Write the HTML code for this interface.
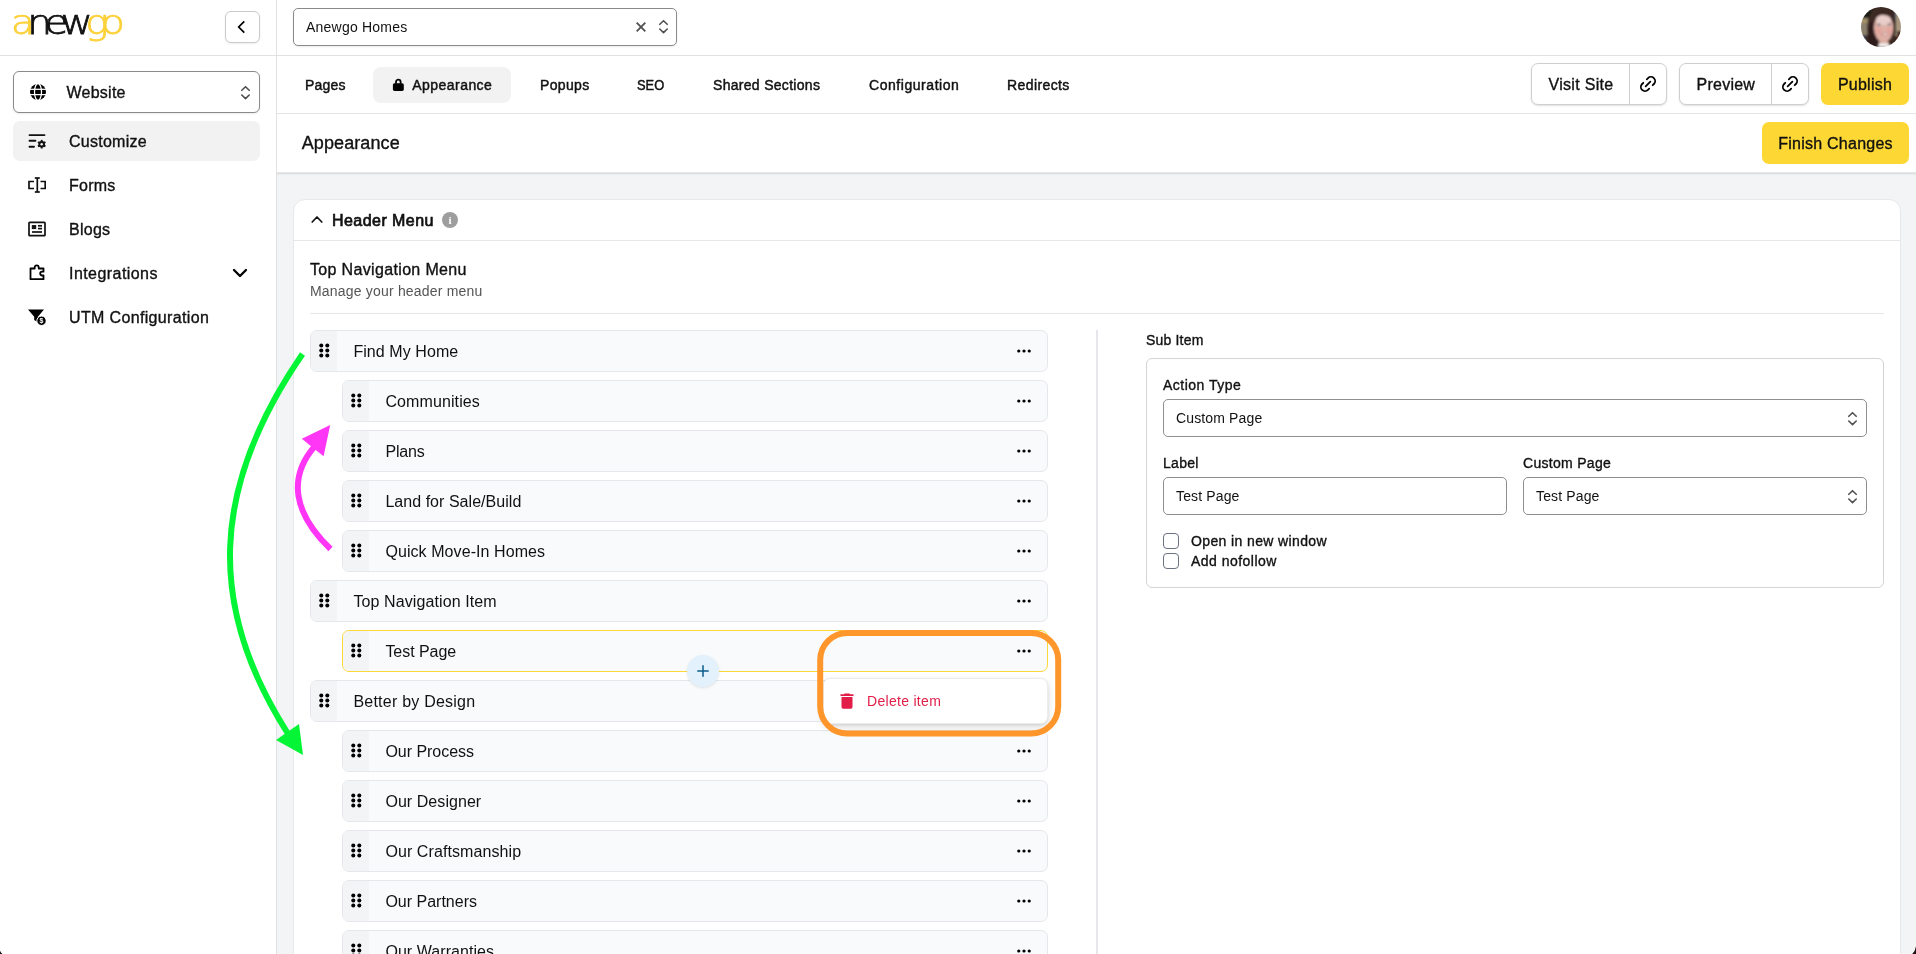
<!DOCTYPE html>
<html lang="en">
<head>
<meta charset="utf-8">
<title>Appearance - Header Menu</title>
<style>
*{box-sizing:border-box;margin:0;padding:0}
html,body{width:1916px;height:954px;overflow:hidden;background:#fff}
body{position:relative;font-family:"Liberation Sans",sans-serif;color:#111;font-size:16px;-webkit-font-smoothing:antialiased}
.abs{position:absolute}
.med{-webkit-text-stroke:0.35px currentColor}
.semi{-webkit-text-stroke:0.7px currentColor}
svg{display:block}
/* sidebar */
#sidebar{left:0;top:0;width:277px;height:954px;border-right:1px solid #e2e2e2;background:#fff}
#topline{left:0;top:55px;width:1916px;height:1px;background:#e2e2e2}
.navitem{left:13px;width:247px;height:40px;border-radius:7px}
.navitem .ico{position:absolute;left:15px;top:11px;width:18px;height:18px}
.navitem .lbl{position:absolute;left:56px;top:1px;line-height:40px;font-size:16px;letter-spacing:.25px;white-space:nowrap}
/* tabs */
.tab{top:67px;height:36px;line-height:36px;font-size:14px;white-space:nowrap;letter-spacing:.05px;-webkit-text-stroke:0.45px currentColor}
.btn{top:63px;height:42px;border-radius:7px;font-size:16px;line-height:44px;white-space:nowrap}
.obtn{border:1px solid #cfcfcf;background:#fff;box-shadow:0 1px 2px rgba(0,0,0,.12)}
.ybtn{background:#fdd835}
/* list rows */
.row{height:42px;border:1px solid #e5e7eb;border-radius:7px;background:#f9fafb;overflow:hidden}
.row .h{position:absolute;left:0;top:0;width:26px;height:40px;background:#f3f4f6}
.row .h svg{position:absolute;left:7.600px;top:12.400px}
.row .t{position:absolute;left:42.400px;top:1px;line-height:40px;font-size:16px;white-space:nowrap}
.row .d{position:absolute;right:16px;top:18px}
.r1{left:310px;width:738px}
.r2{left:342px;width:706px}
.fl{font-size:14px;white-space:nowrap;line-height:16px}
.inp{height:38px;border:1px solid #8f8f8f;border-radius:5px;background:#fff;font-size:14px;line-height:36px;padding-left:12px;white-space:nowrap;letter-spacing:.14px}
.chev{position:absolute;right:9px;top:10px}
.sel{border-color:#fbd737}
</style>
</head>
<body>
<div id="root" style="position:absolute;left:0;top:0;width:1916px;height:954px;will-change:transform">
<svg width="0" height="0" style="position:absolute">
 <defs>
  <g id="grip"><circle cx="2.2" cy="2.2" r="1.95"/><circle cx="8" cy="2.2" r="1.95"/><circle cx="2.2" cy="7.1" r="1.95"/><circle cx="8" cy="7.1" r="1.95"/><circle cx="2.2" cy="12" r="1.95"/><circle cx="8" cy="12" r="1.95"/></g>
  <g id="dots"><circle cx="1.7" cy="1.7" r="1.55"/><circle cx="6.7" cy="1.7" r="1.55"/><circle cx="11.7" cy="1.7" r="1.55"/></g>
  <g id="ud" fill="none" stroke="#505050" stroke-width="1.6" stroke-linecap="round" stroke-linejoin="round"><path d="M0.800 6.300 L4.500 2.700 L8.200 6.300"/><path d="M0.800 11 L4.500 14.600 L8.200 11"/></g>
  <g id="link" fill="none" stroke="#000" stroke-width="2.15" stroke-linecap="round" stroke-linejoin="round"><path d="M9 17H7A5 5 0 0 1 7 7h2"/><path d="M15 7h2a5 5 0 1 1 0 10h-2"/><line x1="8" x2="16" y1="12" y2="12"/></g>
 </defs>
</svg>

<!-- ========== SIDEBAR ========== -->
<div id="sidebar" class="abs"></div>
<div id="topline" class="abs"></div>

<!-- logo -->
<div class="abs" id="logo" style="left:11px;top:0.900px;width:116px;height:44px;font-size:32.800px;line-height:44px;letter-spacing:-6.400px;white-space:nowrap;font-family:'DejaVu Sans Light','DejaVu Sans',sans-serif;font-weight:200;-webkit-text-stroke:0.75px currentColor;transform:scaleX(1.19);transform-origin:0 0"><span style="color:#fdd13a">a</span><span style="color:#111">new</span><span style="color:#fdd13a">go</span></div>

<!-- collapse btn -->
<div class="abs" style="left:225px;top:11px;width:35px;height:32px;border:1px solid #cbcbcb;border-radius:6px;background:#fff;box-shadow:0 1px 2px rgba(0,0,0,.08)">
 <svg class="abs" style="left:10.300px;top:8px" width="12" height="14" viewBox="0 0 12 14" fill="none" stroke="#000" stroke-width="1.700" stroke-linecap="butt" stroke-linejoin="miter"><path d="M8.300 1.300 L2.700 7 L8.300 12.700"/></svg>
</div>

<!-- website select -->
<div class="abs" style="left:13px;top:71px;width:247px;height:42px;border:1px solid #8a8a8a;border-radius:6px;background:#fff;box-shadow:0 1px 2px rgba(0,0,0,.08)">
 <svg class="abs" style="left:16px;top:12px" width="16" height="16" viewBox="0 0 16 16"><circle cx="8" cy="8" r="8" fill="#000"/><g fill="none" stroke="#fff" stroke-width="1.25"><ellipse cx="8" cy="8" rx="3.5" ry="8.4"/><line x1="0" y1="5.3" x2="16" y2="5.3"/><line x1="0" y1="10.600" x2="16" y2="10.600"/></g></svg>
 <div class="abs med" style="left:52.500px;top:1px;line-height:40px;font-size:16px;letter-spacing:.25px">Website</div>
 <svg class="abs" style="right:9.300px;top:11.500px" width="9" height="17" viewBox="0 0 9 17"><use href="#ud"/></svg>
</div>

<!-- nav items -->
<div class="abs navitem" style="top:121px;background:#f2f2f2">
 <svg class="ico" viewBox="0 0 18 18" fill="none" stroke="#111" stroke-width="1.9" stroke-linecap="round"><line x1="1.500" y1="3.100" x2="16.500" y2="3.100"/><line x1="1.500" y1="8.800" x2="7.400" y2="8.800"/><line x1="1.500" y1="14.700" x2="6" y2="14.700"/><g transform="translate(13.700 12.200)" stroke-linecap="butt"><circle cx="0" cy="0" r="2.300" stroke-width="2"/><g stroke-width="1.900"><line x1="0" y1="-4.300" x2="0" y2="4.300"/><line x1="-3.720" y1="-2.150" x2="3.720" y2="2.150"/><line x1="-3.720" y1="2.150" x2="3.720" y2="-2.150"/></g><circle cx="0" cy="0" r="1.250" fill="#f2f2f2" stroke="none"/></g></svg>
 <div class="lbl med">Customize</div>
</div>
<div class="abs navitem" style="top:165px">
 <svg class="ico" viewBox="0 0 18 18" fill="none" stroke="#111" stroke-width="1.7"><path d="M6 5.5H1v7h5"/><path d="M12.5 5.5H17.2v7H12.5"/><line x1="9.3" y1="2" x2="9.3" y2="16"/><line x1="6.8" y1="2" x2="11.8" y2="2"/><line x1="6.8" y1="16" x2="11.8" y2="16"/></svg>
 <div class="lbl med">Forms</div>
</div>
<div class="abs navitem" style="top:209px">
 <svg class="ico" viewBox="0 0 18 18" fill="none" stroke="#111" stroke-width="1.7"><rect x="1" y="2.3" width="16" height="13.4" rx="0.8"/><rect x="4.3" y="5.6" width="3.4" height="3" fill="#111" stroke-width="1"/><line x1="10" y1="5.8" x2="14" y2="5.8"/><line x1="10" y1="8.6" x2="14" y2="8.6"/><line x1="4" y1="12" x2="14" y2="12"/></svg>
 <div class="lbl med">Blogs</div>
</div>
<div class="abs navitem" style="top:253px">
 <svg class="ico" style="top:10.200px;left:15.600px" viewBox="0 0 18 18" fill="none" stroke="#000" stroke-width="1.800" stroke-linejoin="round"><path d="M1.500 5.500h4.200V4.300a2 2 0 0 1 4 0V5.500h4.800v3.200h-1.400a1.900 1.900 0 0 0 0 3.800h1.400v3.700H1.500z"/></svg>
 <div class="lbl med" style="letter-spacing:.44px">Integrations</div>
 <svg class="abs" style="left:219px;top:15px" width="16" height="10" viewBox="0 0 16 10" fill="none" stroke="#000" stroke-width="2.300" stroke-linecap="round" stroke-linejoin="round"><path d="M2 2 L8 8 L14 2"/></svg>
</div>
<div class="abs navitem" style="top:297px">
 <svg class="ico" viewBox="0 0 18 18"><path d="M0 1.400h16L9.900 8.800V14.300L6.200 12V8.800z" fill="#000"/><circle cx="13.500" cy="12.800" r="4.700" fill="#000" stroke="#fff" stroke-width="1"/><text x="13.500" y="15.300" font-size="7" font-weight="bold" fill="#fff" text-anchor="middle" font-family="Liberation Sans, sans-serif">$</text></svg>
 <div class="lbl med" style="letter-spacing:.35px">UTM Configuration</div>
</div>

<!-- ========== TOP BAR ========== -->
<div class="abs" style="left:293px;top:8px;width:384px;height:38px;border:1px solid #8a8a8a;border-radius:5px;background:#fff;box-shadow:0 1px 2px rgba(0,0,0,.08)">
 <div class="abs" style="left:12px;top:0;line-height:36px;font-size:14px;letter-spacing:.22px">Anewgo Homes</div>
 <svg class="abs" style="left:342px;top:13px" width="10" height="10" viewBox="0 0 10 10" fill="none" stroke="#505050" stroke-width="1.800" stroke-linecap="butt"><path d="M0.700 0.700 L9.300 9.300 M9.300 0.700 L0.700 9.300"/></svg>
 <svg class="abs" style="left:365px;top:9.300px" width="9" height="17" viewBox="0 0 9 17"><use href="#ud"/></svg>
</div>

<!-- avatar -->
<svg class="abs" style="left:1861px;top:7px" width="40" height="40" viewBox="0 0 40 40">
 <defs><clipPath id="avc"><circle cx="20" cy="20" r="20"/></clipPath><filter id="avb" x="-10%" y="-10%" width="120%" height="120%"><feGaussianBlur stdDeviation="0.8"/></filter></defs>
 <g clip-path="url(#avc)"><g filter="url(#avb)">
  <rect x="-2" y="-2" width="44" height="44" fill="#35231e"/>
  <rect x="-2" y="-2" width="12" height="13" fill="#1d1d15"/>
  <rect x="-2" y="11" width="9" height="17" fill="#8b806c"/>
  <rect x="0" y="13" width="6" height="2.500" fill="#b09a62"/>
  <rect x="-2" y="28" width="7" height="8" fill="#3f4650"/>
  <rect x="33" y="5" width="9" height="24" fill="#a8977e"/>
  <rect x="33.300" y="5" width="1.600" height="20" fill="#1d2342"/>
  <rect x="36" y="24" width="6" height="8" fill="#3a2016"/>
  <rect x="37" y="30" width="5" height="5" fill="#b24a22"/>
  <ellipse cx="20.500" cy="22" rx="14.500" ry="23" fill="#3c2923"/>
  <ellipse cx="13" cy="28" rx="6" ry="14" fill="#2f1f1b"/>
  <path d="M17 40 L19 34 H26.500 L29 40 Z" fill="#efe9e5"/>
  <rect x="18.500" y="30" width="8.500" height="6" fill="#d7a093"/>
  <ellipse cx="22.600" cy="21" rx="9.700" ry="14.200" fill="#deb0a6"/>
  <ellipse cx="22.500" cy="13" rx="7.600" ry="5.200" fill="#e8cdc8"/>
  <ellipse cx="17.500" cy="23.500" rx="3" ry="3.200" fill="#e3a59d"/>
  <ellipse cx="28.500" cy="23.500" rx="2.800" ry="3.200" fill="#e3a59d"/>
  <ellipse cx="18" cy="17.600" rx="2" ry="0.900" fill="#5d6f7f"/>
  <ellipse cx="28.200" cy="17.300" rx="1.900" ry="0.900" fill="#5d6f7f"/>
  <ellipse cx="24" cy="27.300" rx="4.200" ry="1.500" fill="#c98682"/>
  <ellipse cx="24.300" cy="27.300" rx="3" ry="0.800" fill="#f1e4e0"/>
  <path d="M12 14 C13 5 20 3 24 4 C30 5 33 10 33 18 C31 11 28 8 22 8 C17 8 14 10 12 14Z" fill="#3a2620"/>
 </g></g>
</svg>

<!-- ========== TABS ========== -->
<div class="abs" style="left:277px;top:113px;width:1639px;height:1px;background:#e5e5e5"></div>
<div class="abs tab med" style="left:305px;letter-spacing:0.2px">Pages</div>
<div class="abs" style="left:373px;top:67px;width:138px;height:36px;border-radius:8px;background:#f2f2f2"></div>
<svg class="abs" style="left:392px;top:78px" width="12" height="13" viewBox="0 0 12 13"><path d="M4 5.800V4a2.300 2.300 0 0 1 4.600 0V5.800" fill="none" stroke="#000" stroke-width="1.800"/><rect x="0.900" y="5.300" width="10.900" height="7.600" rx="1.600" fill="#000"/></svg>
<div class="abs tab med" style="left:412.300px;letter-spacing:0.45px">Appearance</div>
<div class="abs tab med" style="left:540px;letter-spacing:0.35px">Popups</div>
<div class="abs tab med" style="left:637px;letter-spacing:0;transform:scaleX(.92);transform-origin:0 50%">SEO</div>
<div class="abs tab med" style="left:713px;letter-spacing:0.3px">Shared Sections</div>
<div class="abs tab med" style="left:869px;letter-spacing:0.55px">Configuration</div>
<div class="abs tab med" style="left:1007px;letter-spacing:0.4px">Redirects</div>

<!-- right buttons -->
<div class="abs btn obtn" style="left:1531px;width:136px">
 <div class="abs med" style="left:16.500px;top:1px;line-height:40px;letter-spacing:.3px">Visit Site</div>
 <div class="abs" style="left:97px;top:0;width:1px;height:40px;background:#cfcfcf"></div>
 <svg class="abs" style="left:106.200px;top:10.200px" width="20" height="20" viewBox="0 0 24 24"><g transform="rotate(-45 12 12)"><use href="#link"/></g></svg>
</div>
<div class="abs btn obtn" style="left:1679px;width:130px">
 <div class="abs med" style="left:16.500px;top:1px;line-height:40px;letter-spacing:.25px">Preview</div>
 <div class="abs" style="left:91px;top:0;width:1px;height:40px;background:#cfcfcf"></div>
 <svg class="abs" style="left:100.200px;top:10.200px" width="20" height="20" viewBox="0 0 24 24"><g transform="rotate(-45 12 12)"><use href="#link"/></g></svg>
</div>
<div class="abs btn ybtn med" style="left:1821px;width:88px;text-align:center;letter-spacing:.25px">Publish</div>

<!-- ========== TITLE ROW ========== -->
<div class="abs med" style="left:301.700px;top:122px;line-height:42px;font-size:18px;letter-spacing:.1px">Appearance</div>
<div class="abs btn ybtn med" style="left:1762px;top:122px;width:147px;text-align:center;letter-spacing:.25px">Finish Changes</div>

<!-- ========== CONTENT BG ========== -->
<div class="abs" style="left:277px;top:172px;width:1639px;height:782px;background:#f3f4f6;box-shadow:inset 0 2px 2px -1px rgba(0,0,0,.12);border-top:1px solid #e6e7e9"></div>

<!-- card -->
<div class="abs" style="left:293px;top:199px;width:1608px;height:780px;background:#fff;border:1px solid #e7e8ea;border-radius:12px"></div>
<svg class="abs" style="left:311px;top:215px" width="12" height="9" viewBox="0 0 12 9" fill="none" stroke="#111" stroke-width="1.7" stroke-linecap="round" stroke-linejoin="round"><path d="M1.200 7 L6 2 L10.800 7"/></svg>
<div class="abs semi" style="left:332px;top:200.500px;line-height:40px;font-size:16px;letter-spacing:.45px">Header Menu</div>
<div class="abs" style="left:442px;top:212px;width:16px;height:16px;border-radius:50%;background:#9e9e9e;color:#fff;font-size:11px;line-height:16px;text-align:center;font-weight:bold;font-family:'Liberation Serif',serif">i</div>
<div class="abs" style="left:294px;top:240px;width:1606px;height:1px;background:#e5e7eb"></div>

<div class="abs med" style="left:310px;top:260px;line-height:20px;font-size:16px;letter-spacing:.34px">Top Navigation Menu</div>
<div class="abs" style="left:310px;top:282px;line-height:18px;font-size:14px;color:#555;letter-spacing:.19px">Manage your header menu</div>
<div class="abs" style="left:310px;top:313px;width:1574px;height:1px;background:#e5e7eb"></div>

<!-- vertical divider -->
<div class="abs" style="left:1096px;top:330px;width:2px;height:624px;background:#e5e7eb"></div>

<!-- rows -->
<div class="abs row r1" style="top:330px"><div class="h"><svg width="11" height="15" viewBox="0 0 10.6 14.2"><use href="#grip"/></svg></div><div class="t" style="letter-spacing:0.07px">Find My Home</div><svg class="d" width="14" height="4" viewBox="0 0 13.4 3.4"><use href="#dots"/></svg></div>
<div class="abs row r2" style="top:380px"><div class="h"><svg width="11" height="15" viewBox="0 0 10.6 14.2"><use href="#grip"/></svg></div><div class="t" style="letter-spacing:0.11px">Communities</div><svg class="d" width="14" height="4" viewBox="0 0 13.4 3.4"><use href="#dots"/></svg></div>
<div class="abs row r2" style="top:430px"><div class="h"><svg width="11" height="15" viewBox="0 0 10.6 14.2"><use href="#grip"/></svg></div><div class="t" style="letter-spacing:-0.18px">Plans</div><svg class="d" width="14" height="4" viewBox="0 0 13.4 3.4"><use href="#dots"/></svg></div>
<div class="abs row r2" style="top:480px"><div class="h"><svg width="11" height="15" viewBox="0 0 10.6 14.2"><use href="#grip"/></svg></div><div class="t" style="letter-spacing:0.04px">Land for Sale/Build</div><svg class="d" width="14" height="4" viewBox="0 0 13.4 3.4"><use href="#dots"/></svg></div>
<div class="abs row r2" style="top:530px"><div class="h"><svg width="11" height="15" viewBox="0 0 10.6 14.2"><use href="#grip"/></svg></div><div class="t" style="letter-spacing:0.08px">Quick Move-In Homes</div><svg class="d" width="14" height="4" viewBox="0 0 13.4 3.4"><use href="#dots"/></svg></div>
<div class="abs row r1" style="top:580px"><div class="h"><svg width="11" height="15" viewBox="0 0 10.6 14.2"><use href="#grip"/></svg></div><div class="t" style="letter-spacing:0.1px">Top Navigation Item</div><svg class="d" width="14" height="4" viewBox="0 0 13.4 3.4"><use href="#dots"/></svg></div>
<div class="abs row r2 sel" style="top:630px"><div class="h"><svg width="11" height="15" viewBox="0 0 10.6 14.2"><use href="#grip"/></svg></div><div class="t" style="letter-spacing:-0.04px">Test Page</div><svg class="d" width="14" height="4" viewBox="0 0 13.4 3.4"><use href="#dots"/></svg></div>
<div class="abs row r1" style="top:680px"><div class="h"><svg width="11" height="15" viewBox="0 0 10.6 14.2"><use href="#grip"/></svg></div><div class="t" style="letter-spacing:0.23px">Better by Design</div><svg class="d" width="14" height="4" viewBox="0 0 13.4 3.4"><use href="#dots"/></svg></div>
<div class="abs row r2" style="top:730px"><div class="h"><svg width="11" height="15" viewBox="0 0 10.6 14.2"><use href="#grip"/></svg></div><div class="t" style="letter-spacing:-0.03px">Our Process</div><svg class="d" width="14" height="4" viewBox="0 0 13.4 3.4"><use href="#dots"/></svg></div>
<div class="abs row r2" style="top:780px"><div class="h"><svg width="11" height="15" viewBox="0 0 10.6 14.2"><use href="#grip"/></svg></div><div class="t" style="letter-spacing:0.06px">Our Designer</div><svg class="d" width="14" height="4" viewBox="0 0 13.4 3.4"><use href="#dots"/></svg></div>
<div class="abs row r2" style="top:830px"><div class="h"><svg width="11" height="15" viewBox="0 0 10.6 14.2"><use href="#grip"/></svg></div><div class="t" style="letter-spacing:0.09px">Our Craftsmanship</div><svg class="d" width="14" height="4" viewBox="0 0 13.4 3.4"><use href="#dots"/></svg></div>
<div class="abs row r2" style="top:880px"><div class="h"><svg width="11" height="15" viewBox="0 0 10.6 14.2"><use href="#grip"/></svg></div><div class="t" style="letter-spacing:0.0px">Our Partners</div><svg class="d" width="14" height="4" viewBox="0 0 13.4 3.4"><use href="#dots"/></svg></div>
<div class="abs row r2" style="top:930px"><div class="h"><svg width="11" height="15" viewBox="0 0 10.6 14.2"><use href="#grip"/></svg></div><div class="t" style="letter-spacing:0.06px">Our Warranties</div><svg class="d" width="14" height="4" viewBox="0 0 13.4 3.4"><use href="#dots"/></svg></div>

<!-- plus button -->
<div class="abs" style="left:687px;top:655px;width:32px;height:32px;border-radius:50%;background:#e3f1fc;box-shadow:0 1px 3px rgba(0,0,0,.10)">
 <svg class="abs" style="left:10px;top:10px" width="12" height="12" viewBox="0 0 12 12" fill="none" stroke="#0b5c8f" stroke-width="1.5" stroke-linecap="round"><path d="M6 0.800V11.200M0.800 6H11.200"/></svg>
</div>

<!-- dropdown -->
<div class="abs" style="left:823px;top:678px;width:225px;height:46px;background:#fff;border-radius:7px;border:1px solid #ececec;box-shadow:0 4px 8px rgba(0,0,0,.12),0 1px 3px rgba(0,0,0,.10)">
 <svg class="abs" style="left:16px;top:14px" width="14" height="16" viewBox="0 0 14 16" fill="#e11d48"><path d="M4.600 0.400h4.800l0.800 0.900H13.500v1.800H0.500V1.300H3.800z"/><path d="M1.500 4h11v10a1.800 1.800 0 0 1-1.800 1.800H3.300A1.800 1.800 0 0 1 1.500 14z"/></svg>
 <div class="abs" style="left:43px;top:0;line-height:44px;font-size:14px;color:#e11d48;letter-spacing:.3px">Delete item</div>
</div>

<!-- right panel -->
<div class="abs fl med" style="left:1146px;top:332px;letter-spacing:.18px">Sub Item</div>
<div class="abs" style="left:1146px;top:358px;width:738px;height:230px;border:1px solid #d4d4d4;border-radius:6px;background:#fff"></div>
<div class="abs fl med" style="left:1163px;top:377px;letter-spacing:.5px">Action Type</div>
<div class="abs inp" style="left:1163px;top:399px;width:704px">Custom Page<svg class="chev" width="9" height="17" viewBox="0 0 9 17"><use href="#ud"/></svg></div>
<div class="abs fl med" style="left:1163px;top:455px;letter-spacing:.3px">Label</div>
<div class="abs fl med" style="left:1523px;top:455px;letter-spacing:.3px">Custom Page</div>
<div class="abs inp" style="left:1163px;top:477px;width:344px">Test Page</div>
<div class="abs inp" style="left:1523px;top:477px;width:344px">Test Page<svg class="chev" width="9" height="17" viewBox="0 0 9 17"><use href="#ud"/></svg></div>
<div class="abs" style="left:1163px;top:533px;width:16px;height:16px;border:1px solid #6b7280;border-radius:4px;background:#fff"></div>
<div class="abs fl med" style="left:1191px;top:533px;letter-spacing:.38px">Open in new window</div>
<div class="abs" style="left:1163px;top:553px;width:16px;height:16px;border:1px solid #6b7280;border-radius:4px;background:#fff"></div>
<div class="abs fl med" style="left:1191px;top:553px;letter-spacing:.47px">Add nofollow</div>

<!-- annotations -->
<svg class="abs" style="left:0;top:0" width="1916" height="954" viewBox="0 0 1916 954" fill="none">
 <rect x="820.200" y="633" width="238" height="100.500" rx="27" ry="27" stroke="#ff962b" stroke-width="6"/>
 <path d="M1916 944.500 Q1915 950.500 1910.800 954 L1916 954 Z" fill="#fff"/><path d="M1916 946.300 Q1915.200 951.200 1912.200 954 L1916 954 Z" fill="#1e1214"/><path d="M0 950.800 Q0.800 952.800 2.400 954 L0 954 Z" fill="#161214"/>
 <path d="M302.500 354 C 209 490 208 608 287.500 733" stroke="#04f535" stroke-width="6" fill="none"/>
 <path d="M303 755 L276 740 L299 724 Z" fill="#04f535"/>
 <path d="M330.500 549 C 294 514 287 478 315 446" stroke="#ff36f6" stroke-width="6" fill="none"/>
 <path d="M330.200 425 L301.800 438.700 L323.600 456.200 Z" fill="#ff36f6"/>
</svg>

</div>
</body>
</html>
